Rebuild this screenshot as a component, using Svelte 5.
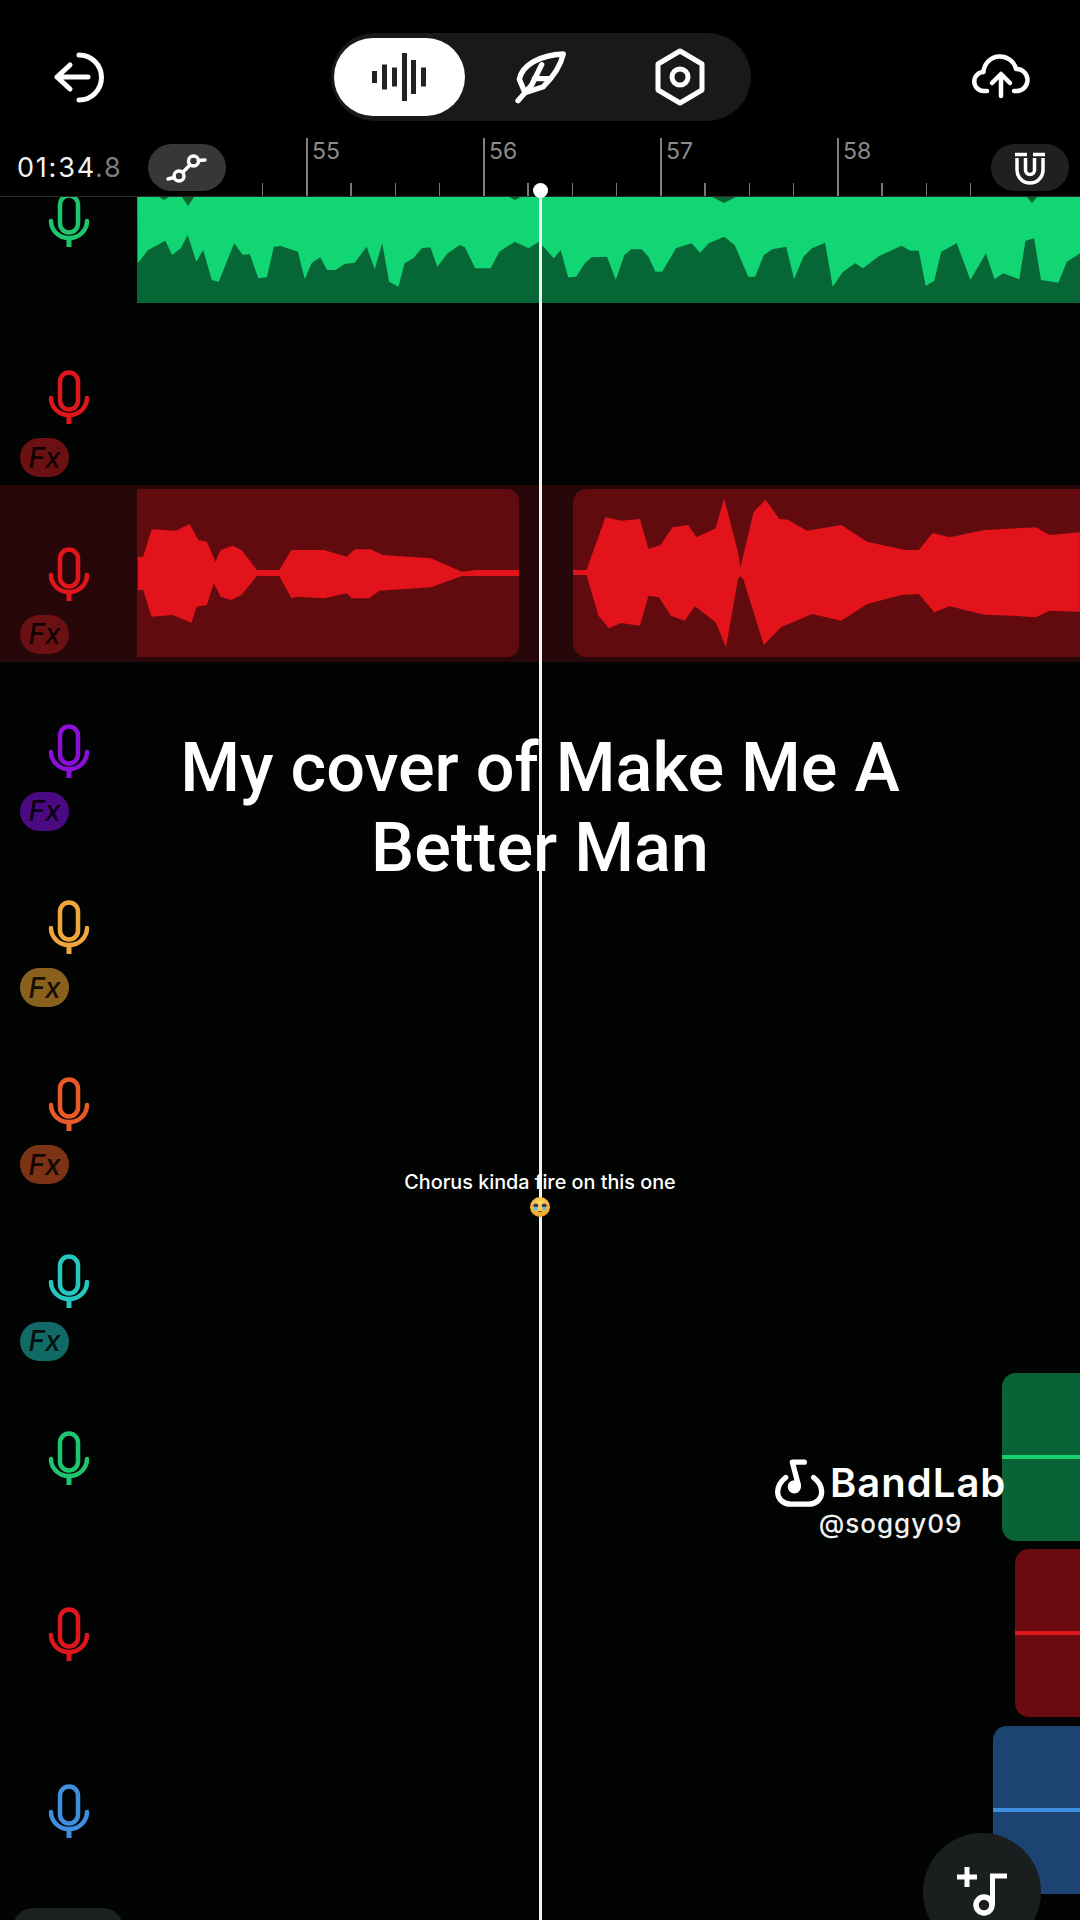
<script lang="ts">
  const ROW_H = 176.75;
  const LANE_X = 137;

  // traced waveforms: zoomed-crop coordinates, mapped back to clip-local pixels
  const trace = (raw: string, ox: number, oy: number, sx: number, cx: number, cy: number) =>
    raw.trim().split(/\s+/).map((p) => {
      const [x, y] = p.split(",").map(Number);
      return `${(ox + x / sx - cx).toFixed(1)},${(oy + y / 3 - cy).toFixed(1)}`;
    }).join(" ");

  const greenTop = 135;
  const greenA = `400,790 430,750 480,722 500,765 525,745 545,705 570,785 590,750 615,840 635,845 680,730 705,765 725,762 750,835 775,832 795,740 815,738 865,755 885,838 905,790 930,772 950,810 975,810 1000,792 1030,788 1065,740 1088,808 1110,730 1130,845 1157,860 1175,790 1200,775 1225,745 1250,742 1270,800 1300,760 1335,735 1350,742 1380,805 1425,805 1450,755 1495,725 1535,745 1565,725`;
  const greenB = `0,728 40,775 60,750 82,832 105,830 130,790 150,772 195,770 220,840 245,765 265,748 295,748 315,770 335,815 355,815 395,745 440,730 465,758 490,730 535,710 565,735 605,830 625,830 650,765 675,748 715,740 738,838 765,770 790,745 828,728 850,860 880,815 915,790 938,805 985,768 1050,737 1075,752 1100,752 1120,858 1145,842 1165,755 1210,730 1250,840 1295,760 1320,838 1345,820 1392,838 1410,722 1435,715 1455,840 1505,848 1530,785 1568,760`;
  const greenWave =
    `0,0 943,0 943,${(760 / 3 - greenTop).toFixed(1)} ` +
    trace(greenB, 540, 0, 2.904, LANE_X, greenTop).split(" ").reverse().join(" ") + " " +
    trace(greenA, 0, 0, 2.904, LANE_X, greenTop).split(" ").reverse().join(" ");

  const notches = [
    [188, 6, 9],
    [164, 5, 3],
    [515, 6, 3],
    [724, 12, 6],
    [1032, 5, 6],
  ].map(([x, w, h]) => {
    const l = x - LANE_X;
    return `${l - w},62 ${l + w},62 ${l},${62 + h}`;
  });

  const redA = trace(
    `400,650 415,650 440,568 510,572 550,552 575,600 600,605 625,665 640,630 675,617 700,630 745,690 810,690 845,630 940,630 1005,650 1030,628 1075,628 1110,645 1250,655 1340,695 1380,690 1505,690
     1505,708 1380,708 1340,708 1250,742 1100,752 1070,775 1020,775 1005,760 940,775 860,770 845,775 810,708 745,708 700,765 670,780 640,770 620,730 600,795 570,800 555,848 500,825 440,830 415,750 400,750`,
    0, 340, 2.9, LANE_X, 489,
  );
  const redB = trace(
    `95,303 135,303 190,145 235,155 290,150 315,240 350,228 385,175 430,168 455,205 510,178 535,88 575,250 582,295 590,260 620,130 655,92 695,150 720,152 775,185 875,168 950,218 1060,243 1100,243 1140,192 1190,205 1290,183 1440,175 1480,198 1568,190
     1568,428 1480,425 1440,445 1370,440 1290,437 1190,412 1145,430 1100,375 1050,378 950,405 875,455 790,435 700,475 650,528 590,330 582,322 575,330 540,535 510,460 450,412 420,455 380,440 345,385 315,380 290,470 235,462 200,478 170,440 135,318 95,318`,
    540, 470, 2.904, 573, 490,
  );

  const tracks = [
    { color: "#1fc56e", fx: null, clips: [{ left: 137, width: 943, cls: "clip-green-full", wave: greenWave, fill: "#12d574", notches }] },
    { color: "#e0161d", fx: "#6b1013", clips: [] },
    {
      color: "#e0161d", fx: "#6b1013", active: true,
      clips: [
        { left: 137, width: 382, cls: "clip-red clip-cut", wave: redA, fill: "#e2131a" },
        { left: 573, width: 520, cls: "clip-red", wave: redB, fill: "#e2131a" },
      ],
    },
    { color: "#8a10d8", fx: "#4c0a82", clips: [] },
    { color: "#f0a63a", fx: "#8a611c", clips: [] },
    { color: "#e95a28", fx: "#7c3214", clips: [] },
    { color: "#25c6bd", fx: "#126a66", clips: [] },
    { color: "#1fc56e", fx: null, clips: [{ left: 1002, width: 100, cls: "clip-green", line: "#18d070" }] },
    { color: "#e0161d", fx: null, clips: [{ left: 1015, width: 100, cls: "clip-dark-red", line: "#e2161c" }] },
    { color: "#3f8ee0", fx: null, clips: [{ left: 993, width: 100, cls: "clip-blue", line: "#3f8ee0" }] },
  ];

  const ticks = Array.from({ length: 17 }, (_, i) => 306 + 44.25 * (i - 1));
  const bars = [
    { x: 374, h: 12 }, { x: 384, h: 25 }, { x: 394, h: 19 },
    { x: 404, h: 48 }, { x: 413, h: 34 }, { x: 423, h: 19 },
  ];
</script>

<div class="screen">
  <header class="topbar">
    <svg class="back" width="60" height="60" viewBox="0 0 60 60" fill="none" stroke="#fff" stroke-width="5" stroke-linecap="round" stroke-linejoin="round">
      <path d="M30 8A22.5 22.5 0 0 1 30 53" />
      <path d="M39 30H8M21 18 8 30l13 12" />
    </svg>

    <div class="modes">
      <div class="mode-active">
        <svg width="131" height="78" viewBox="334 38 131 78" fill="#222">
          {#each bars as b}
            <rect x={b.x - 2} y={77 - b.h / 2} width="5" height={b.h} />
          {/each}
        </svg>
      </div>
      <div class="mode">
        <svg width="100" height="70" viewBox="0 6 300 210" fill="none" stroke="#fff" stroke-width="16" stroke-linecap="round" stroke-linejoin="round">
          <path d="M105 158 88 118C96 75 150 45 220 42 210 85 185 115 160 140Z" />
          <path d="M155 74 125 135 84 182M133 116H178" />
        </svg>
      </div>
      <div class="mode">
        <svg width="60" height="60" viewBox="0 0 60 60" fill="none" stroke="#fff" stroke-width="5" stroke-linejoin="round">
          <path d="M30 4 52 17V43L30 56 8 43V17Z" />
          <circle cx="30" cy="30" r="8" />
        </svg>
      </div>
    </div>

    <svg class="cloud" width="60" height="60" viewBox="0 0 60 60" fill="none" stroke="#fff" stroke-width="4.5" stroke-linecap="round" stroke-linejoin="round">
      <path d="M16 44H13A9.5 9.5 0 0 1 12.5 25 16.5 16.5 0 0 1 45 22 11 11 0 0 1 46 44H43" />
      <path d="M30 49V28M21 36 30 27 39 36" />
    </svg>
  </header>

  <div class="ruler">
    {#each ticks as x, i}
      <span class="tick" class:major={(i - 1) % 4 === 0} style="left: {x}px"></span>
    {/each}
    {#each [55, 56, 57, 58] as n, i}
      <span class="bar-no" style="left: {306 + 177 * i + 6}px">{n}</span>
    {/each}

    <div class="time">01:34<span>.8</span></div>
    <div class="pill auto">
      <svg width="78" height="47" viewBox="148 144 78 47" fill="none" stroke="#fff" stroke-width="3.5" stroke-linecap="round">
        <circle cx="179" cy="176" r="5" />
        <circle cx="193.5" cy="161" r="5" />
        <path d="M168 179 174 177.5M183 172 190 165M198.500 160.500 205 160" />
      </svg>
    </div>
    <div class="pill magnet">
      <svg width="77" height="48" viewBox="0 0 77 48" fill="none" stroke="#fff" stroke-width="3.500">
        <path d="M26 14V26A13 13 0 0 0 52 26V14" />
        <path d="M34.500 14V26A4.500 4.500 0 0 0 43.500 26V14" />
        <path d="M24 10.500H36M42 10.500H54" />
      </svg>
    </div>
  </div>

  <div class="tracks">
    {#each tracks as t}
      <div class="track" class:active={t.active} style="height: {ROW_H}px">
        <div class="head">
          <svg class="mic" width="44" height="54" viewBox="0 0 44 54" fill="none" stroke={t.color} stroke-width="4.5" stroke-linecap="round">
            <rect x="13" y="2.500" width="18" height="37" rx="9" />
            <path d="M4 28A18 17 0 0 0 40 28" />
            <path d="M22 46V54" stroke-width="5" stroke-linecap="butt" />
          </svg>
          {#if t.fx}
            <span class="fx" style="background: {t.fx}">Fx</span>
          {/if}
        </div>
        {#each t.clips as c}
          <div class="clip {c.cls}" style="left: {c.left}px; width: {c.width}px">
            {#if c.wave}
              <svg class="wave" width={c.width} height="168" viewBox="0 0 {c.width} 168">
                <polygon points={c.wave} fill={c.fill} />
                {#each c.notches ?? [] as n}
                  <polygon points={n} fill="#076636" />
                {/each}
              </svg>
            {/if}
            {#if c.line}
              <span class="clip-line" style="background: {c.line}"></span>
            {/if}
          </div>
        {/each}
      </div>
    {/each}
  </div>

  <div class="playhead"><span class="knob"></span></div>

  <div class="title">My cover of Make Me A Better Man</div>

  <div class="subtitle">
    <span>Chorus kinda fire on this one</span>
    <svg width="20" height="20" viewBox="0 0 20 20">
      <defs>
        <radialGradient id="face" cx="50%" cy="35%" r="70%">
          <stop offset="0" stop-color="#ffdf6a" />
          <stop offset="1" stop-color="#ee9a22" />
        </radialGradient>
      </defs>
      <circle cx="10" cy="10" r="10" fill="url(#face)" />
      <ellipse cx="5.800" cy="8.500" rx="2.600" ry="2" fill="#4a3550" />
      <ellipse cx="14.200" cy="8.500" rx="2.600" ry="2" fill="#4a3550" />
      <path d="M3.500 10h4.500l-1 3.500h-2.500zM12 10h4.500l-1 3.500h-2.500z" fill="#5cbde0" />
      <path d="M8 15q2-1.300 4 0" fill="none" stroke="#7a4512" stroke-width="1" />
    </svg>
  </div>

  <div class="watermark">
    <div class="brand">
      <svg width="70" height="64" viewBox="0 0 210 191" fill="none" stroke="#fff" stroke-width="16" stroke-linecap="round" stroke-linejoin="round">
        <path d="M62 82C44 96 38 110 38 125 38 148 56 162 78 162H130C152 162 170 148 170 125 170 110 164 96 146 82" />
        <path d="M118 36H82L100 104" />
        <circle cx="88" cy="110" r="12" fill="#fff" />
      </svg>
      <span class="brand-name">BandLab</span>
    </div>
    <div class="handle">@soggy09</div>
  </div>

  <div class="stub"></div>

  <div class="fab">
    <svg width="118" height="118" viewBox="0 0 118 118" fill="none" stroke="#fff" stroke-width="5">
      <path d="M34 44H54M44 34V54" />
      <path d="M69.500 72V43H84" />
      <circle cx="61" cy="72" r="8" stroke-width="5.500" />
    </svg>
  </div>
</div>

<style>
  :global(body) {
    margin: 0;
    background: #010402;
  }

  .screen {
    position: relative;
    width: 1080px;
    height: 1920px;
    overflow: hidden;
    display: flex;
    flex-direction: column;
    background: #010402;
    color: #fff;
    font-family: Inter, "Liberation Sans", sans-serif;
  }

  .topbar {
    display: flex;
    align-items: center;
    padding-top: 33px;
    height: 88px;
    flex: none;
    background: #000;
  }

  .back {
    margin-left: 49px;
    margin-right: 222px;
  }

  .modes {
    display: flex;
    align-items: center;
    width: 420px;
    height: 88px;
    padding-left: 3px;
    box-sizing: border-box;
    border-radius: 44px;
    background: #17191b;
  }

  .mode-active {
    width: 131px;
    height: 78px;
    margin-right: 5px;
    border-radius: 39px;
    background: #fff;
    flex: none;
  }

  .mode-active svg,
  .mode svg {
    display: block;
  }

  .mode {
    width: 140px;
    flex: none;
    display: flex;
    justify-content: center;
  }

  .cloud {
    margin-left: auto;
    margin-right: 49px;
  }

  .ruler {
    position: relative;
    flex: none;
    height: 76px;
    box-sizing: border-box;
    display: flex;
    align-items: center;
    padding-top: 17px;
    background: #000;
    border-bottom: 1px solid #2c2c2c;
  }

  .tick {
    position: absolute;
    bottom: 0;
    width: 1.500px;
    height: 13px;
    background: #777;
  }

  .tick.major {
    height: 58px;
    background: #808080;
  }

  .bar-no {
    position: absolute;
    top: 16px;
    font-size: 23px;
    line-height: 28px;
    color: #8b8b8b;
  }

  .time {
    width: 148px;
    padding-left: 17px;
    box-sizing: border-box;
    font-size: 27px;
    letter-spacing: 1.8px;
    color: #f2f2f2;
  }

  .time span {
    color: #7c7c7c;
  }

  .pill {
    position: relative;
    width: 78px;
    height: 47px;
    border-radius: 24px;
    flex: none;
  }

  .pill svg {
    display: block;
  }

  .auto {
    background: #373737;
  }

  .magnet {
    margin-left: auto;
    margin-right: 11px;
    background: #1e2021;
  }

  .tracks {
    flex: 1;
    min-height: 0;
    overflow: hidden;
  }

  .tracks .track:first-child {
    margin-top: -65.75px;
  }

  .track {
    position: relative;
    box-sizing: border-box;
  }

  .track.active {
    background: #270709;
  }

  .head {
    display: flex;
    flex-direction: column;
    align-items: flex-start;
    padding: 62px 0 0 20px;
  }

  .mic {
    margin-left: 27px;
    display: block;
  }

  .fx {
    width: 49px;
    height: 39px;
    margin-top: 14px;
    border-radius: 20px;
    display: flex;
    align-items: center;
    justify-content: center;
    font-size: 28px;
    font-weight: 500;
    font-style: italic;
    color: rgba(0, 0, 0, 0.85);
  }

  .clip {
    position: absolute;
    top: 4px;
    height: 168px;
    overflow: hidden;
    border-radius: 14px 0 0 14px;
  }

  .wave {
    display: block;
  }

  .clip-green-full {
    border-radius: 0;
    background: #076636;
  }

  .clip-red {
    background: #620b0e;
  }

  .clip-cut {
    border-radius: 0 12px 12px 0;
  }

  .clip-green {
    background: #096337;
  }

  .clip-dark-red {
    background: #690b0f;
  }

  .clip-blue {
    background: #1c4372;
  }

  .clip-line {
    position: absolute;
    left: 0;
    right: 0;
    top: 82px;
    height: 4px;
  }

  .playhead {
    position: absolute;
    left: 539px;
    top: 190px;
    bottom: 0;
    width: 2.500px;
    background: #f4f4f4;
  }

  .knob {
    position: absolute;
    left: -6.250px;
    top: -7.500px;
    width: 15px;
    height: 15px;
    border-radius: 50%;
    background: #fff;
  }

  .title {
    position: absolute;
    left: 160px;
    width: 760px;
    top: 728px;
    text-align: center;
    font-family: Roboto, "Liberation Sans", sans-serif;
    font-size: 68.4px;
    font-weight: 500;
    line-height: 80px;
  }

  .subtitle {
    position: absolute;
    left: 0;
    right: 0;
    top: 1168px;
    display: flex;
    flex-direction: column;
    align-items: center;
    font-size: 19.8px;
    font-weight: 500;
    line-height: 28px;
    gap: 1px;
  }

  .watermark {
    position: absolute;
    left: 776px;
    top: 1450px;
    width: 229px;
    display: flex;
    flex-direction: column;
    align-items: center;
  }

  .brand {
    display: flex;
    align-items: center;
    align-self: flex-start;
    margin-left: -11px;
    height: 64px;
  }

  .brand-name {
    margin-left: -5px;
    font-size: 40px;
    font-weight: 600;
    letter-spacing: 1px;
    white-space: nowrap;
  }

  .handle {
    margin-top: -6px;
    font-size: 26px;
    font-weight: 500;
    letter-spacing: 1px;
    color: #f0f0f0;
  }

  .stub {
    position: absolute;
    left: 13px;
    top: 1908px;
    width: 110px;
    height: 40px;
    border-radius: 20px;
    background: #1c1f20;
  }

  .fab {
    position: absolute;
    left: 923px;
    top: 1833px;
    width: 118px;
    height: 118px;
    border-radius: 50%;
    background: #1a1e1f;
  }

  .fab svg {
    display: block;
  }
</style>
